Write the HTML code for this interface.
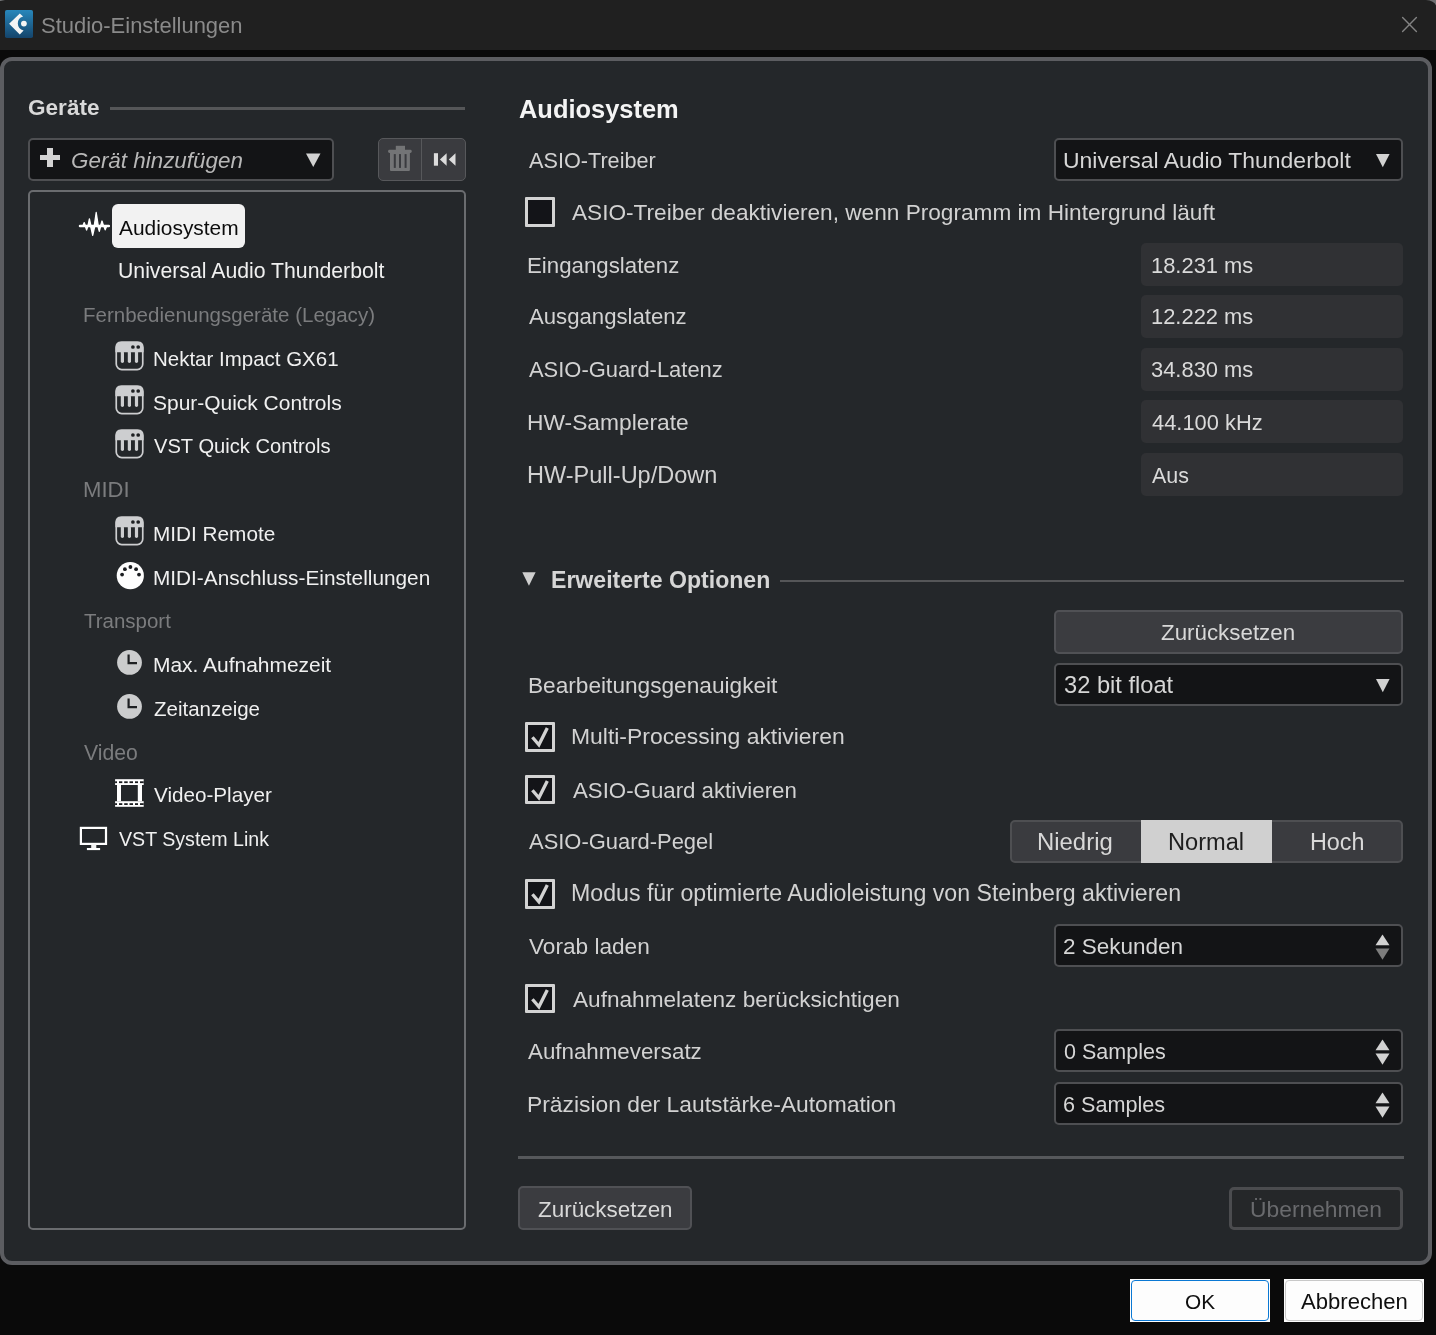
<!DOCTYPE html>
<html><head><meta charset="utf-8"><title>Studio-Einstellungen</title>
<style>
html,body{margin:0;padding:0;width:1436px;height:1335px;overflow:hidden;background:#0a0a0a;}
body{position:relative;font-family:"Liberation Sans",sans-serif;}
.t{position:absolute;white-space:nowrap;line-height:1;font-family:"Liberation Sans",sans-serif;will-change:transform;}
.b{position:absolute;}
</style></head><body>
<div class="b" style="left:0px;top:0px;width:1436px;height:50px;background:#202020;border-radius:0px;box-sizing:border-box;"></div>
<div class="b" style="left:0px;top:50px;width:1436px;height:1285px;background:#0a0a0a;border-radius:0px;box-sizing:border-box;"></div>
<svg class="b" style="left:1420px;top:0px" width="16" height="12" viewBox="0 0 16 12"><path d="M6,0 Q14,0.6 16,5.6 L16,0 Z" fill="#6e6f71"/></svg>
<div class="b" style="left:0;top:0;width:5px;height:1px;background:linear-gradient(90deg,#7a7c7e,#202020)"></div>
<svg class="b" style="left:2px;top:7px" width="34" height="34" viewBox="0 0 34 34">
<defs><linearGradient id="lg" x1="0" y1="0" x2="0" y2="1"><stop offset="0" stop-color="#2887bb"/><stop offset="1" stop-color="#14446b"/></linearGradient></defs>
<rect x="3" y="3" width="28" height="28" rx="1.8" fill="url(#lg)"/>
<path d="M17.8,6.4 L21.1,9.4 A7.2,7.2 0 0 0 21.6,23.4 L17.8,27.4 L7.1,16.8 Z" fill="#f4f4f4"/>
<circle cx="21.9" cy="16.6" r="2.9" fill="#f4f4f4"/>
</svg>
<div class="t" style="left:41.0px;top:14.6px;font-size:21.98px;color:#8a8a8a;font-weight:400;font-style:normal;">Studio-Einstellungen</div>
<svg class="b" style="left:1390px;top:5px" width="40" height="40" viewBox="0 0 40 40">
<path d="M12.6,12.6 L26.4,26.5 M26.4,12.6 L12.6,26.5" stroke="#838383" stroke-width="1.4" stroke-linecap="round"/></svg>
<div class="b" style="left:0px;top:57px;width:1432px;height:1208px;background:#24272a;border-radius:12px;box-sizing:border-box;border:4px solid #5c5d61;"></div>
<div class="t" style="left:28.0px;top:96.7px;font-size:22.57px;color:#d9d9d9;font-weight:700;font-style:normal;">Geräte</div>
<div class="b" style="left:110px;top:107px;width:355px;height:3px;background:#555658;border-radius:0px;box-sizing:border-box;"></div>
<div class="b" style="left:28px;top:138px;width:306px;height:43px;background:#131416;border-radius:5px;box-sizing:border-box;border:2px solid #4e4f52;"></div>
<div class="b" style="left:40px;top:155px;width:20px;height:5px;background:#d4d4d4;border-radius:0px;box-sizing:border-box;"></div>
<div class="b" style="left:47.3px;top:148px;width:5.400000000000006px;height:19px;background:#d4d4d4;border-radius:0px;box-sizing:border-box;"></div>
<div class="t" style="left:70.8px;top:149.7px;font-size:22.42px;color:#b8b8b8;font-weight:400;font-style:italic;">Gerät hinzufügen</div>
<svg class="b" style="left:306px;top:153px" width="15" height="15" viewBox="0 0 15 15"><path d="M0,0.5 L14.5,0.5 L7.25,14 Z" fill="#d2d2d2"/></svg>
<div class="b" style="left:378px;top:137.5px;width:87.5px;height:43.5px;background:#3a3b3f;border-radius:5px;box-sizing:border-box;border:1.5px solid #57585b;"></div>
<div class="b" style="left:420.5px;top:138px;width:1.0px;height:42.5px;background:#57585b;border-radius:0px;box-sizing:border-box;"></div>
<svg class="b" style="left:378px;top:136px" width="88" height="46" viewBox="0 0 88 46">
<rect x="17.8" y="9.8" width="9.2" height="4.5" fill="#737476"/>
<rect x="10.1" y="13.8" width="23.6" height="3.2" rx="1.4" fill="#737476"/>
<path d="M12,16.9 L31.9,16.9 L31.9,34 Q31.9,35 30.9,35 L13,35 Q12,35 12,34 Z" fill="#737476"/>
<rect x="15.8" y="18.1" width="2" height="13.8" fill="#3a3b3f"/>
<rect x="21" y="18.1" width="2" height="13.8" fill="#3a3b3f"/>
<rect x="26.6" y="18.1" width="2" height="13.8" fill="#3a3b3f"/>
<rect x="55.9" y="17.2" width="4.1" height="12.5" fill="#dcdcdc"/>
<path d="M61.9,23.45 L68.6,17.2 L68.6,29.7 Z" fill="#dcdcdc"/>
<path d="M70.8,23.45 L77.5,17.2 L77.5,29.7 Z" fill="#dcdcdc"/>
</svg>
<div class="b" style="left:28px;top:190px;width:438px;height:1040px;background:#24272a;border-radius:5px;box-sizing:border-box;border:2px solid #6a6c6f;"></div>
<svg class="b" style="left:74px;top:205px" width="40" height="40" viewBox="0 0 40 40">
<g fill="#fff" stroke="#fff" stroke-width="1.3" stroke-linejoin="round">
<rect x="5.4" y="20.4" width="30" height="1.3" rx="0.6"/>
<path d="M8.9,21 L10.2,17.6 L11.5,21 Z"/>
<path d="M11.3,21 L12.6,25 L13.9,21 Z"/>
<path d="M13.9,21 L15.4,14 L17,21 Z"/>
<path d="M16.6,21 L18.7,30.3 L20.8,21 Z"/>
<path d="M20.2,21 L22.2,7.5 L24.3,21 Z"/>
<path d="M23.9,21 L25.3,26.3 L26.7,21 Z"/>
<path d="M26.5,21 L28,16 L29.6,21 Z"/>
<path d="M29.8,21 L31.2,24.8 L32.7,21 Z"/>
</g></svg>
<div class="b" style="left:112px;top:203.8px;width:133px;height:43.79999999999998px;background:#f2f2f2;border-radius:6px;box-sizing:border-box;"></div>
<div class="t" style="left:119.0px;top:218.1px;font-size:20.9px;color:#0c0c0c;font-weight:400;font-style:normal;">Audiosystem</div>
<div class="t" style="left:118.4px;top:260.7px;font-size:21.24px;color:#f0f0f0;font-weight:400;font-style:normal;">Universal Audio Thunderbolt</div>
<div class="t" style="left:83.2px;top:305.3px;font-size:20.53px;color:#7b7c7e;font-weight:400;font-style:normal;">Fernbedienungsgeräte (Legacy)</div>
<svg class="b" style="left:110px;top:335px" width="40" height="40" viewBox="0 0 40 40">
<rect x="6.25" y="7.25" width="26.5" height="27.3" rx="5.5" fill="none" stroke="#cdced0" stroke-width="1.7"/>
<path d="M5.4,17.2 L5.4,12 Q5.4,6.4 11,6.4 L28,6.4 Q33.6,6.4 33.6,12 L33.6,17.2 Z" fill="#cdced0"/>
<circle cx="22.9" cy="12" r="1.85" fill="#1e2023"/>
<circle cx="28.2" cy="12" r="1.85" fill="#1e2023"/>
<rect x="10.8" y="16" width="3.2" height="11.9" rx="1.6" fill="#cdced0"/>
<rect x="17.8" y="16" width="3.2" height="11.9" rx="1.6" fill="#cdced0"/>
<rect x="24.9" y="16" width="3.2" height="11.9" rx="1.6" fill="#cdced0"/>
</svg>
<div class="t" style="left:153.4px;top:349.2px;font-size:20.49px;color:#f0f0f0;font-weight:400;font-style:normal;">Nektar Impact GX61</div>
<svg class="b" style="left:110px;top:379px" width="40" height="40" viewBox="0 0 40 40">
<rect x="6.25" y="7.25" width="26.5" height="27.3" rx="5.5" fill="none" stroke="#cdced0" stroke-width="1.7"/>
<path d="M5.4,17.2 L5.4,12 Q5.4,6.4 11,6.4 L28,6.4 Q33.6,6.4 33.6,12 L33.6,17.2 Z" fill="#cdced0"/>
<circle cx="22.9" cy="12" r="1.85" fill="#1e2023"/>
<circle cx="28.2" cy="12" r="1.85" fill="#1e2023"/>
<rect x="10.8" y="16" width="3.2" height="11.9" rx="1.6" fill="#cdced0"/>
<rect x="17.8" y="16" width="3.2" height="11.9" rx="1.6" fill="#cdced0"/>
<rect x="24.9" y="16" width="3.2" height="11.9" rx="1.6" fill="#cdced0"/>
</svg>
<div class="t" style="left:153.4px;top:393.4px;font-size:20.96px;color:#f0f0f0;font-weight:400;font-style:normal;">Spur-Quick Controls</div>
<svg class="b" style="left:110px;top:423px" width="40" height="40" viewBox="0 0 40 40">
<rect x="6.25" y="7.25" width="26.5" height="27.3" rx="5.5" fill="none" stroke="#cdced0" stroke-width="1.7"/>
<path d="M5.4,17.2 L5.4,12 Q5.4,6.4 11,6.4 L28,6.4 Q33.6,6.4 33.6,12 L33.6,17.2 Z" fill="#cdced0"/>
<circle cx="22.9" cy="12" r="1.85" fill="#1e2023"/>
<circle cx="28.2" cy="12" r="1.85" fill="#1e2023"/>
<rect x="10.8" y="16" width="3.2" height="11.9" rx="1.6" fill="#cdced0"/>
<rect x="17.8" y="16" width="3.2" height="11.9" rx="1.6" fill="#cdced0"/>
<rect x="24.9" y="16" width="3.2" height="11.9" rx="1.6" fill="#cdced0"/>
</svg>
<div class="t" style="left:154.4px;top:436.2px;font-size:20.15px;color:#f0f0f0;font-weight:400;font-style:normal;">VST Quick Controls</div>
<div class="t" style="left:83.2px;top:479.0px;font-size:22.1px;color:#7b7c7e;font-weight:400;font-style:normal;">MIDI</div>
<svg class="b" style="left:110px;top:510px" width="40" height="40" viewBox="0 0 40 40">
<rect x="6.25" y="7.25" width="26.5" height="27.3" rx="5.5" fill="none" stroke="#cdced0" stroke-width="1.7"/>
<path d="M5.4,17.2 L5.4,12 Q5.4,6.4 11,6.4 L28,6.4 Q33.6,6.4 33.6,12 L33.6,17.2 Z" fill="#cdced0"/>
<circle cx="22.9" cy="12" r="1.85" fill="#1e2023"/>
<circle cx="28.2" cy="12" r="1.85" fill="#1e2023"/>
<rect x="10.8" y="16" width="3.2" height="11.9" rx="1.6" fill="#cdced0"/>
<rect x="17.8" y="16" width="3.2" height="11.9" rx="1.6" fill="#cdced0"/>
<rect x="24.9" y="16" width="3.2" height="11.9" rx="1.6" fill="#cdced0"/>
</svg>
<div class="t" style="left:153.4px;top:523.9px;font-size:20.75px;color:#f0f0f0;font-weight:400;font-style:normal;">MIDI Remote</div>
<svg class="b" style="left:110px;top:555px" width="40" height="40" viewBox="0 0 40 40">
<circle cx="20.3" cy="20.7" r="13.6" fill="#fdfdfd"/>
<circle cx="12.1" cy="19.6" r="1.9" fill="#1a1c1f"/>
<circle cx="14.9" cy="14.2" r="1.9" fill="#1a1c1f"/>
<circle cx="20.4" cy="12" r="1.9" fill="#1a1c1f"/>
<circle cx="26.1" cy="14.2" r="1.9" fill="#1a1c1f"/>
<circle cx="29" cy="19.6" r="1.9" fill="#1a1c1f"/>
</svg>
<div class="t" style="left:153.4px;top:568.1px;font-size:20.79px;color:#f0f0f0;font-weight:400;font-style:normal;">MIDI-Anschluss-Einstellungen</div>
<div class="t" style="left:84.2px;top:610.5px;font-size:20.48px;color:#7b7c7e;font-weight:400;font-style:normal;">Transport</div>
<svg class="b" style="left:110px;top:642px" width="40" height="40" viewBox="0 0 40 40">
<circle cx="19.5" cy="20.4" r="12.4" fill="#cbcccd"/>
<path d="M18.6,12.6 L18.6,21.2 L27,21.2" fill="none" stroke="#1e2023" stroke-width="2.2"/>
</svg>
<div class="t" style="left:153.4px;top:655.3px;font-size:20.96px;color:#f0f0f0;font-weight:400;font-style:normal;">Max. Aufnahmezeit</div>
<svg class="b" style="left:110px;top:686px" width="40" height="40" viewBox="0 0 40 40">
<circle cx="19.5" cy="20.4" r="12.4" fill="#cbcccd"/>
<path d="M18.6,12.6 L18.6,21.2 L27,21.2" fill="none" stroke="#1e2023" stroke-width="2.2"/>
</svg>
<div class="t" style="left:154.4px;top:699.2px;font-size:20.51px;color:#f0f0f0;font-weight:400;font-style:normal;">Zeitanzeige</div>
<div class="t" style="left:84.0px;top:741.6px;font-size:21.2px;color:#7b7c7e;font-weight:400;font-style:normal;">Video</div>
<svg class="b" style="left:110px;top:772px" width="40" height="40" viewBox="0 0 40 40">
<rect x="5.1" y="7.2" width="28.6" height="5.8" fill="#fff"/>
<rect x="5.1" y="29.2" width="28.6" height="5.6" fill="#fff"/>
<rect x="7" y="13" width="4" height="16.2" fill="#fff"/>
<rect x="27.8" y="13" width="4.2" height="16.2" fill="#fff"/>
<g fill="#1a1c1f">
<rect x="5.1" y="9.3" width="1.9" height="1.8"/><rect x="9" y="9.3" width="3.3" height="1.8"/><rect x="14.2" y="9.3" width="3.5" height="1.8"/><rect x="19.5" y="9.3" width="3.5" height="1.8"/><rect x="25" y="9.3" width="3" height="1.8"/><rect x="30" y="9.3" width="3.7" height="1.8"/>
<rect x="5.1" y="31.2" width="1.9" height="1.8"/><rect x="9" y="31.2" width="3.3" height="1.8"/><rect x="14.2" y="31.2" width="3.5" height="1.8"/><rect x="19.5" y="31.2" width="3.5" height="1.8"/><rect x="25" y="31.2" width="3" height="1.8"/><rect x="30" y="31.2" width="3.7" height="1.8"/>
</g></svg>
<div class="t" style="left:154.4px;top:785.0px;font-size:20.67px;color:#f0f0f0;font-weight:400;font-style:normal;">Video-Player</div>
<svg class="b" style="left:74px;top:818px" width="40" height="40" viewBox="0 0 40 40">
<rect x="6.9" y="9.9" width="25.1" height="16" fill="none" stroke="#fff" stroke-width="2.2"/>
<rect x="17.2" y="26.5" width="5.1" height="4" fill="#f2f2f2"/>
<rect x="12.9" y="30" width="13.2" height="2.1" fill="#fff"/>
</svg>
<div class="t" style="left:119.0px;top:830.4px;font-size:19.61px;color:#f0f0f0;font-weight:400;font-style:normal;">VST System Link</div>
<div class="t" style="left:518.6px;top:96.6px;font-size:25.45px;color:#f4f4f4;font-weight:700;font-style:normal;">Audiosystem</div>
<div class="t" style="left:528.6px;top:149.7px;font-size:21.66px;color:#d2d2d2;font-weight:400;font-style:normal;">ASIO-Treiber</div>
<div class="b" style="left:1054px;top:138px;width:349px;height:43px;background:#131416;border-radius:5px;box-sizing:border-box;border:2px solid #4e4f52;"></div>
<div class="t" style="left:1063.4px;top:148.6px;font-size:22.94px;color:#d6d6d6;font-weight:400;font-style:normal;">Universal Audio Thunderbolt</div>
<svg class="b" style="left:1376px;top:154px" width="15" height="15" viewBox="0 0 15 15"><path d="M0,0 L13.6,0 L6.8,13.2 Z" fill="#d2d2d2"/></svg>
<div class="b" style="left:525.1px;top:197.3px;width:29.7px;height:29.7px;box-sizing:border-box;border:3.1px solid #d3d3d3;background:#131418;border-radius:1px"></div>
<div class="t" style="left:572.4px;top:201.6px;font-size:22.64px;color:#d2d2d2;font-weight:400;font-style:normal;">ASIO-Treiber deaktivieren, wenn Programm im Hintergrund läuft</div>
<div class="b" style="left:1141px;top:242.6px;width:262px;height:43.00000000000003px;background:#303134;border-radius:5px;box-sizing:border-box;"></div>
<div class="t" style="left:527.4px;top:255.3px;font-size:22.27px;color:#d2d2d2;font-weight:400;font-style:normal;">Eingangslatenz</div>
<div class="t" style="left:1151.0px;top:255.3px;font-size:21.91px;color:#dadada;font-weight:400;font-style:normal;">18.231 ms</div>
<div class="b" style="left:1141px;top:295.2px;width:262px;height:43.0px;background:#303134;border-radius:5px;box-sizing:border-box;"></div>
<div class="t" style="left:529.4px;top:306.3px;font-size:22.16px;color:#d2d2d2;font-weight:400;font-style:normal;">Ausgangslatenz</div>
<div class="t" style="left:1151.0px;top:306.3px;font-size:21.91px;color:#dadada;font-weight:400;font-style:normal;">12.222 ms</div>
<div class="b" style="left:1141px;top:347.5px;width:262px;height:43.0px;background:#303134;border-radius:5px;box-sizing:border-box;"></div>
<div class="t" style="left:529.4px;top:359.1px;font-size:21.93px;color:#d2d2d2;font-weight:400;font-style:normal;">ASIO-Guard-Latenz</div>
<div class="t" style="left:1151.0px;top:359.1px;font-size:21.91px;color:#dadada;font-weight:400;font-style:normal;">34.830 ms</div>
<div class="b" style="left:1141px;top:400.1px;width:262px;height:43.0px;background:#303134;border-radius:5px;box-sizing:border-box;"></div>
<div class="t" style="left:527.4px;top:410.5px;font-size:22.81px;color:#d2d2d2;font-weight:400;font-style:normal;">HW-Samplerate</div>
<div class="t" style="left:1152.0px;top:411.5px;font-size:21.88px;color:#dadada;font-weight:400;font-style:normal;">44.100 kHz</div>
<div class="b" style="left:1141px;top:452.6px;width:262px;height:43.0px;background:#303134;border-radius:5px;box-sizing:border-box;"></div>
<div class="t" style="left:527.4px;top:463.5px;font-size:23.53px;color:#d2d2d2;font-weight:400;font-style:normal;">HW-Pull-Up/Down</div>
<div class="t" style="left:1152.0px;top:465.5px;font-size:21.46px;color:#dadada;font-weight:400;font-style:normal;">Aus</div>
<svg class="b" style="left:522px;top:572px" width="15" height="15" viewBox="0 0 15 15"><path d="M0.3,0.3 L13.6,0.3 L6.95,13.7 Z" fill="#cfcfcf"/></svg>
<div class="t" style="left:550.6px;top:568.9px;font-size:23.08px;color:#d6d6d6;font-weight:700;font-style:normal;">Erweiterte Optionen</div>
<div class="b" style="left:780px;top:580px;width:624px;height:2px;background:#555658;border-radius:0px;box-sizing:border-box;"></div>
<div class="b" style="left:1054px;top:610px;width:349px;height:43.5px;background:#3b3c40;border-radius:5px;box-sizing:border-box;border:2px solid #505155;"></div>
<div class="t" style="left:1161.4px;top:621.7px;font-size:22.35px;color:#d8d8d8;font-weight:400;font-style:normal;">Zurücksetzen</div>
<div class="t" style="left:528.2px;top:673.6px;font-size:22.66px;color:#d2d2d2;font-weight:400;font-style:normal;">Bearbeitungsgenauigkeit</div>
<div class="b" style="left:1054px;top:663px;width:349px;height:43px;background:#131416;border-radius:5px;box-sizing:border-box;border:2px solid #4e4f52;"></div>
<div class="t" style="left:1063.6px;top:673.6px;font-size:23.66px;color:#d6d6d6;font-weight:400;font-style:normal;">32 bit float</div>
<svg class="b" style="left:1376px;top:679px" width="15" height="15" viewBox="0 0 15 15"><path d="M0,0 L13.6,0 L6.8,13.2 Z" fill="#d2d2d2"/></svg>
<div class="b" style="left:525.1px;top:722.0px;width:29.7px;height:29.7px;box-sizing:border-box;border:3.1px solid #d3d3d3;background:#131418;border-radius:1px"></div><svg class="b" style="left:520px;top:716.0px" width="40" height="40" viewBox="0 0 40 40"><path d="M12.4,21.2 L18.9,28.8 L27.3,11.9" fill="none" stroke="#d2d2d2" stroke-width="3.3"/></svg>
<div class="t" style="left:571.4px;top:725.3px;font-size:22.92px;color:#d2d2d2;font-weight:400;font-style:normal;">Multi-Processing aktivieren</div>
<div class="b" style="left:525.1px;top:774.7px;width:29.7px;height:29.7px;box-sizing:border-box;border:3.1px solid #d3d3d3;background:#131418;border-radius:1px"></div><svg class="b" style="left:520px;top:768.7px" width="40" height="40" viewBox="0 0 40 40"><path d="M12.4,21.2 L18.9,28.8 L27.3,11.9" fill="none" stroke="#d2d2d2" stroke-width="3.3"/></svg>
<div class="t" style="left:573.0px;top:779.7px;font-size:22.26px;color:#d2d2d2;font-weight:400;font-style:normal;">ASIO-Guard aktivieren</div>
<div class="t" style="left:529.0px;top:831.1px;font-size:21.94px;color:#d2d2d2;font-weight:400;font-style:normal;">ASIO-Guard-Pegel</div>
<div class="b" style="left:1010px;top:820px;width:393px;height:43.200000000000045px;background:#3a3b3f;border-radius:5px;box-sizing:border-box;border:2px solid #4e4f52;"></div>
<div class="b" style="left:1141px;top:820px;width:131px;height:43.200000000000045px;background:#d0d0d0;border-radius:0px;box-sizing:border-box;"></div>
<div class="t" style="left:1036.8px;top:829.5px;font-size:23.92px;color:#d8d8d8;font-weight:400;font-style:normal;">Niedrig</div>
<div class="t" style="left:1168.0px;top:830.5px;font-size:23.62px;color:#1e1e1e;font-weight:400;font-style:normal;">Normal</div>
<div class="t" style="left:1310.4px;top:830.5px;font-size:23.37px;color:#d8d8d8;font-weight:400;font-style:normal;">Hoch</div>
<div class="b" style="left:525.1px;top:879.0px;width:29.7px;height:29.7px;box-sizing:border-box;border:3.1px solid #d3d3d3;background:#131418;border-radius:1px"></div><svg class="b" style="left:520px;top:873.0px" width="40" height="40" viewBox="0 0 40 40"><path d="M12.4,21.2 L18.9,28.8 L27.3,11.9" fill="none" stroke="#d2d2d2" stroke-width="3.3"/></svg>
<div class="t" style="left:571.0px;top:882.3px;font-size:23.17px;color:#d2d2d2;font-weight:400;font-style:normal;">Modus für optimierte Audioleistung von Steinberg aktivieren</div>
<div class="t" style="left:528.8px;top:935.6px;font-size:22.64px;color:#d2d2d2;font-weight:400;font-style:normal;">Vorab laden</div>
<div class="b" style="left:1054px;top:924.3px;width:349px;height:43.200000000000045px;background:#131416;border-radius:5px;box-sizing:border-box;border:2px solid #4e4f52;"></div><div class="t" style="left:1062.8px;top:936.0px;font-size:22.5px;color:#d6d6d6;font-weight:400;font-style:normal;">2 Sekunden</div><svg class="b" style="left:1375px;top:933.9px" width="16" height="26" viewBox="0 0 16 26"><path d="M0.5,11.2 L14.5,11.2 L7.5,0.5 Z" fill="#d2d2d2"/><path d="M0.5,14.6 L14.5,14.6 L7.5,25.8 Z" fill="#7d7d7d"/></svg>
<div class="b" style="left:525.1px;top:983.6px;width:29.7px;height:29.7px;box-sizing:border-box;border:3.1px solid #d3d3d3;background:#131418;border-radius:1px"></div><svg class="b" style="left:520px;top:977.6px" width="40" height="40" viewBox="0 0 40 40"><path d="M12.4,21.2 L18.9,28.8 L27.3,11.9" fill="none" stroke="#d2d2d2" stroke-width="3.3"/></svg>
<div class="t" style="left:573.0px;top:988.5px;font-size:22.61px;color:#d2d2d2;font-weight:400;font-style:normal;">Aufnahmelatenz berücksichtigen</div>
<div class="t" style="left:528.0px;top:1040.5px;font-size:22.34px;color:#d2d2d2;font-weight:400;font-style:normal;">Aufnahmeversatz</div>
<div class="b" style="left:1054px;top:1029.3px;width:349px;height:43.100000000000136px;background:#131416;border-radius:5px;box-sizing:border-box;border:2px solid #4e4f52;"></div><div class="t" style="left:1063.8px;top:1042.0px;font-size:21.53px;color:#d6d6d6;font-weight:400;font-style:normal;">0 Samples</div><svg class="b" style="left:1375px;top:1038.8px" width="16" height="26" viewBox="0 0 16 26"><path d="M0.5,11.2 L14.5,11.2 L7.5,0.5 Z" fill="#d2d2d2"/><path d="M0.5,14.6 L14.5,14.6 L7.5,25.8 Z" fill="#d2d2d2"/></svg>
<div class="t" style="left:526.8px;top:1092.8px;font-size:22.84px;color:#d2d2d2;font-weight:400;font-style:normal;">Präzision der Lautstärke-Automation</div>
<div class="b" style="left:1054px;top:1082.1px;width:349px;height:43.100000000000136px;background:#131416;border-radius:5px;box-sizing:border-box;border:2px solid #4e4f52;"></div><div class="t" style="left:1062.8px;top:1093.8px;font-size:21.61px;color:#d6d6d6;font-weight:400;font-style:normal;">6 Samples</div><svg class="b" style="left:1375px;top:1091.7px" width="16" height="26" viewBox="0 0 16 26"><path d="M0.5,11.2 L14.5,11.2 L7.5,0.5 Z" fill="#d2d2d2"/><path d="M0.5,14.6 L14.5,14.6 L7.5,25.8 Z" fill="#d2d2d2"/></svg>
<div class="b" style="left:518px;top:1156px;width:886px;height:3px;background:#56585b;border-radius:0px;box-sizing:border-box;"></div>
<div class="b" style="left:518.4px;top:1186.4px;width:174.10000000000002px;height:43.19999999999982px;background:#3b3c40;border-radius:5px;box-sizing:border-box;border:2px solid #505155;"></div>
<div class="t" style="left:538.4px;top:1198.5px;font-size:22.43px;color:#d8d8d8;font-weight:400;font-style:normal;">Zurücksetzen</div>
<div class="b" style="left:1229px;top:1187px;width:174px;height:42.59999999999991px;background:#252729;border-radius:5px;box-sizing:border-box;border:3px solid #4b4c4f;"></div>
<div class="t" style="left:1249.8px;top:1197.5px;font-size:22.83px;color:#696a6d;font-weight:400;font-style:normal;">Übernehmen</div>
<div class="b" style="left:1130px;top:1279px;width:140px;height:43px;background:#fdfdfd;border-radius:0px;box-sizing:border-box;"></div>
<div class="b" style="left:1131.2px;top:1280.2px;width:137.5999999999999px;height:40.59999999999991px;background:none;border-radius:4px;box-sizing:border-box;border:1.3px solid #0a78d4;"></div>
<div class="t" style="left:1184.6px;top:1291.5px;font-size:20.81px;color:#0f0f0f;font-weight:400;font-style:normal;">OK</div>
<div class="b" style="left:1284px;top:1279px;width:140px;height:43px;background:#fdfdfd;border-radius:0px;box-sizing:border-box;"></div>
<div class="b" style="left:1285.2px;top:1280.2px;width:137.5999999999999px;height:40.59999999999991px;background:none;border-radius:4px;box-sizing:border-box;border:1.1px solid #c8c8c8;"></div>
<div class="t" style="left:1301.0px;top:1290.5px;font-size:22.08px;color:#0f0f0f;font-weight:400;font-style:normal;">Abbrechen</div>
</body></html>
